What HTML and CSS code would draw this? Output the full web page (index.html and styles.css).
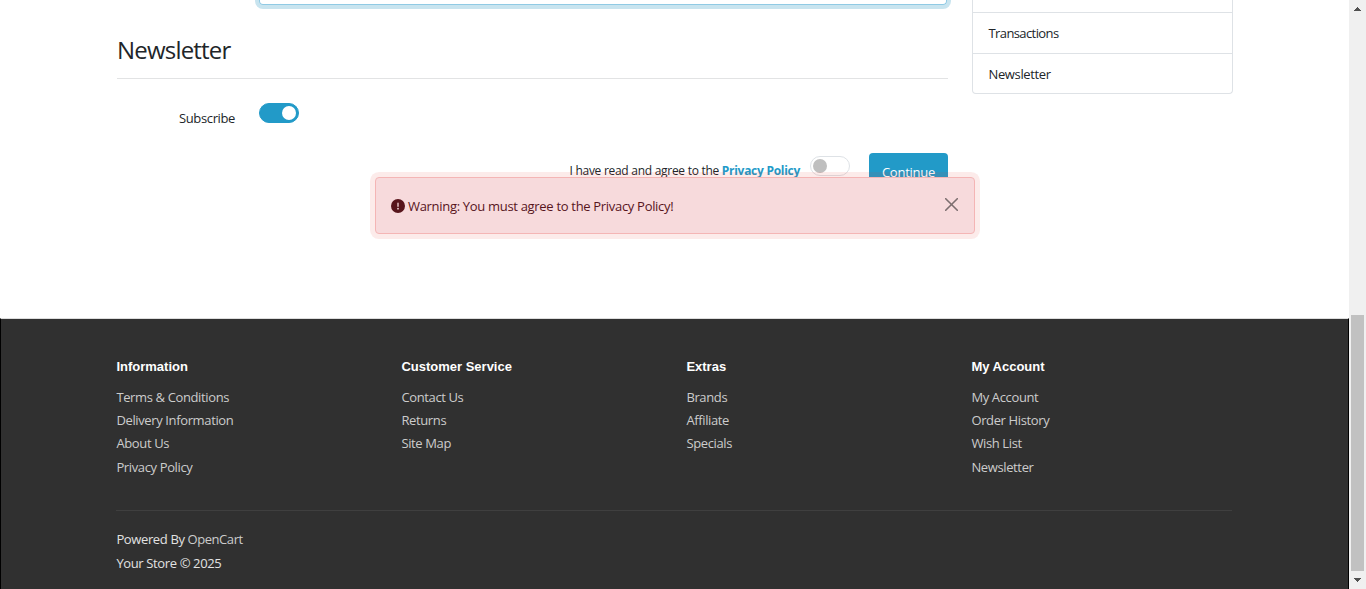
FILE: index.html
```html
<!DOCTYPE html>
<html lang="en">
<head>
<meta charset="utf-8">
<title>Register Account</title>
<link rel="stylesheet" href="styles.css">
</head>
<body>
<div class="window">
  <div class="page">
    <main class="main">
      <div class="content">
        <div class="password-field"></div>
        <h2 class="legend">Newsletter</h2>
        <div class="subscribe">
          <span class="label">Subscribe</span>
          <span class="switch switch-on"></span>
        </div>
        <div class="actions">
          <span class="agree">I have read and agree to the <b>Privacy Policy</b></span>
          <span class="switch"></span>
          <button class="continue">Continue</button>
        </div>
      </div>
      <aside class="sidebar">
        <div class="side-item side-cut"></div>
        <a class="side-item side-tight">Transactions</a>
        <a class="side-item">Newsletter</a>
      </aside>
    </main>
    <footer class="footer">
      <div class="columns">
        <div class="col"><h5>Information</h5><a>Terms &amp; Conditions</a><a>Delivery Information</a><a>About Us</a><a>Privacy Policy</a></div>
        <div class="col"><h5>Customer Service</h5><a>Contact Us</a><a>Returns</a><a>Site Map</a></div>
        <div class="col"><h5>Extras</h5><a>Brands</a><a>Affiliate</a><a>Specials</a></div>
        <div class="col"><h5>My Account</h5><a>My Account</a><a>Order History</a><a>Wish List</a><a>Newsletter</a></div>
      </div>
      <div class="powered">Powered By <a>OpenCart</a><br>Your Store © 2025</div>
    </footer>
    <div class="alert">
      <svg class="alert-icon" viewBox="0 0 512 512"><path fill="#58151c" d="M256 512A256 256 0 1 0 256 0a256 256 0 1 0 0 512zm0-384c13.300 0 24 10.700 24 24v112c0 13.300-10.700 24-24 24s-24-10.700-24-24V152c0-13.300 10.700-24 24-24zm-32 224a32 32 0 1 1 64 0 32 32 0 1 1-64 0z"/></svg>
      <span class="alert-text">Warning: You must agree to the Privacy Policy!</span>
      <svg class="close" viewBox="0 0 13 13"><path d="M.7.7l11.600 11.600M12.300.7L.7 12.300" fill="none" stroke="#7c6e6f" stroke-width="1.600" stroke-linecap="round"/></svg>
    </div>
  </div>
  <div class="scrollbar">
    <svg class="arrow" viewBox="0 0 7 4" shape-rendering="crispEdges"><path fill="#505050" d="M3 0h1v1h1v1h1v1h1v1H0V3h1V2h1V1h1z"/></svg>
    <div class="thumb"></div>
    <svg class="arrow" viewBox="0 0 7 4" shape-rendering="crispEdges"><path fill="#505050" d="M0 0h7v1H6v1H5v1H4v1H3V3H2V2H1V1H0z"/></svg>
  </div>
</div>
</body>
</html>
```
FILE: styles.css
```css
* { box-sizing: border-box; }
body { margin: 0; background: #fff; color: #212529; font: 13px/20px "Open Sans", sans-serif; letter-spacing: -0.37px; overflow: hidden; }
.window { display: flex; width: 1366px; height: 589px; overflow: hidden; }
.page { position: relative; width: 1349px; }
.main { display: flex; gap: 24px; height: 318px; padding-left: 117px; }
.content { width: 831px; }
.password-field { width: 688px; height: 5px; margin-left: 142px; border: 1px solid #90cae4; border-top: 0; border-radius: 0 0 4px 4px; box-shadow: 0 0 0 4px #c8e4ef; }
.legend { height: 74px; margin: 0 0 24px; padding-top: 29px; border-bottom: 1px solid #e2e3e4; font-size: 24px; line-height: 32px; font-weight: 400; letter-spacing: -0.8px; }
.subscribe { display: flex; gap: 24px; height: 50px; }
.label { width: 118px; padding-top: 5px; text-align: right; }
.switch { width: 40px; height: 20px; padding: 3px; border: 1px solid #dee2e6; border-radius: 10px; }
.switch::before { content: ""; display: block; width: 14px; height: 14px; margin-top: -1px; border-radius: 50%; background: #bfbfbf; }
.switch-on { background: #229ac8; border-color: #229ac8; }
.switch-on::before { margin-left: 19px; background: #fff; }
.actions { display: flex; justify-content: flex-end; }
.agree { margin: 8px 10px 0 0; font-size: 12px; letter-spacing: -0.28px; white-space: nowrap; }
.agree b { color: #229ac8; }
.actions .switch { margin: 3px 19px 0 0; padding-left: 2px; }
.continue { width: 79px; height: 38px; padding: 0; border: 0; border-radius: 4px; background: #229ac8; color: #fff; font: inherit; letter-spacing: -0.25px; }
.sidebar { width: 261px; height: 94px; border: 1px solid #dee2e6; border-top: 0; border-radius: 0 0 4px 4px; }
.side-item { display: block; height: 40px; padding: 10px 15.5px; border-top: 1px solid #dee2e6; }
.side-item + .side-item { height: 41px; }
.side-item.side-cut { height: 12px; padding: 0; border: 0; }
.side-tight { letter-spacing: -0.6px; }
.footer { height: 271px; padding: 37px 116px 0 115px; border: 1px solid #000; border-top-color: #ddd; border-bottom: 0; background: #303030; color: #e2e2e2; }
.columns { display: flex; height: 154px; padding-left: 0.4px; }
.col { flex: 0 0 285px; }
.col h5 { margin: 0 0 9px; color: #fff; font: bold 13px/21px "Liberation Sans", sans-serif; letter-spacing: 0; }
.col a { display: block; height: 23px; line-height: 23px; }
.col a:nth-of-type(4) { margin-top: 1px; }
.col a, .powered a { color: #ccc; }
.powered { padding: 16px 0 0 0.4px; border-top: 1px solid #3f3f3f; line-height: 24px; }
.powered a { letter-spacing: -0.45px; }
.alert { position: absolute; left: 375px; top: 177px; display: flex; align-items: center; width: 600px; height: 57px; padding: 0 16px 0 15px; border: 1px solid #f4b5b5; border-radius: 4px; background: #f7dadc; color: #58151c; letter-spacing: -0.31px; box-shadow: 0 0 0 5px rgba(230, 60, 50, .1); }
.alert-icon { width: 14px; height: 14px; margin-right: 3px; }
.close { width: 13px; height: 13px; margin: -3px 0 0 auto; }
.scrollbar { display: flex; flex-direction: column; align-items: center; width: 17px; padding: 7px 0; background: #f0f0f0; }
.arrow { width: 7px; height: 4px; }
.thumb { width: 13px; height: 256px; margin: 304px 0 7px; background: #c1c1c1; }
```
